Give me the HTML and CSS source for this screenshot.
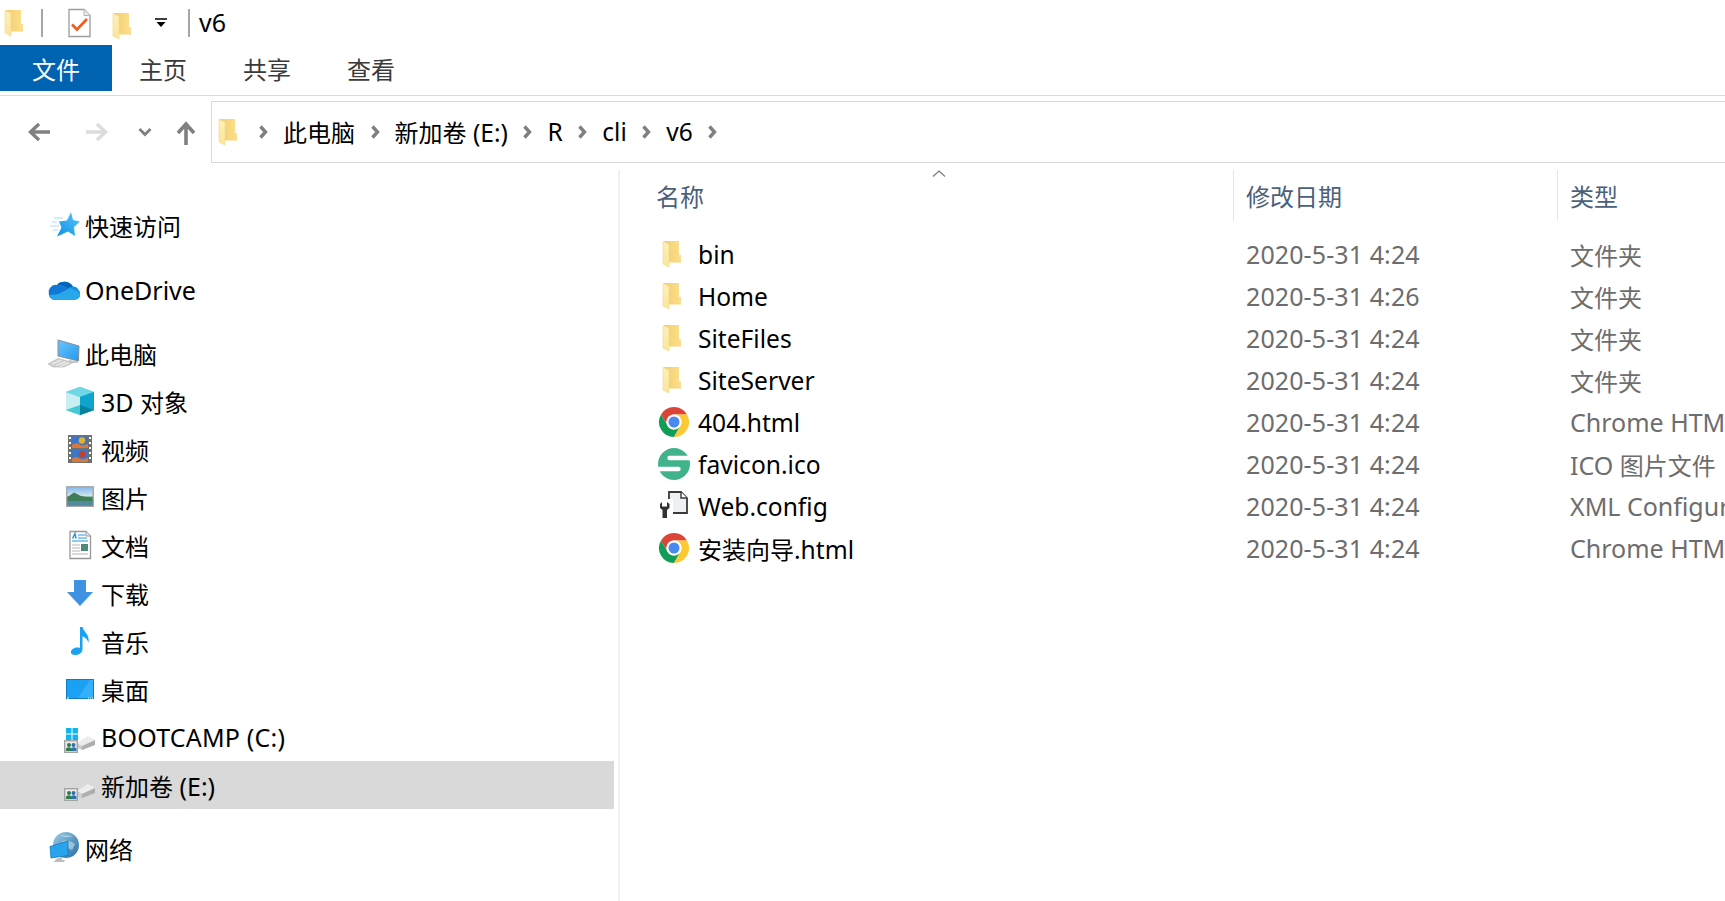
FILE: index.html
```html
<!DOCTYPE html>
<html lang="zh-CN">
<head>
<meta charset="utf-8">
<title>v6</title>
<link rel="stylesheet" href="styles.css">
</head>
<body>
<svg class="defs" aria-hidden="true">
  <defs>
    <linearGradient id="gFolder" x1="0" y1="0" x2="1" y2="0"><stop offset="0" stop-color="#f4cd6c"/><stop offset="1" stop-color="#fbe08f"/></linearGradient>
    <linearGradient id="gFront" x1="0" y1="0" x2="0" y2="1"><stop offset="0" stop-color="#fff0b8"/><stop offset="1" stop-color="#fbe59c"/></linearGradient>
    <linearGradient id="gStar" x1="0" y1="1" x2="1" y2="0"><stop offset="0" stop-color="#0a8fe8"/><stop offset="1" stop-color="#5cc8fb"/></linearGradient>
    <linearGradient id="gScreen" x1="0" y1="0" x2="1" y2="1"><stop offset="0" stop-color="#6cc4fb"/><stop offset="1" stop-color="#1f9bf0"/></linearGradient>
    <linearGradient id="gSky" x1="0" y1="0" x2="0" y2="1"><stop offset="0" stop-color="#7fb7ee"/><stop offset=".45" stop-color="#cfe4ea"/><stop offset=".55" stop-color="#4c8a5c"/><stop offset="1" stop-color="#3f7d96"/></linearGradient>
    <linearGradient id="gGlobe" x1="0" y1="0" x2="1" y2="1"><stop offset="0" stop-color="#9fcde6"/><stop offset="1" stop-color="#246ea6"/></linearGradient>

    <symbol id="i-folder" viewBox="0 0 32 32">
      <path d="M6 3H21V17H23V24H10L6 20z" fill="url(#gFolder)"/>
      <path d="M5 3.500L11 6V29L5 26z" fill="url(#gFront)" stroke="#f2d889" stroke-width=".6"/>
      <path d="M11 24H23" stroke="#f7d778" stroke-width="1"/>
    </symbol>
    <symbol id="i-chrome" viewBox="0 0 32 32">
      <path d="M3 8.500A15 15 0 0 1 29 8.500H16A7.500 7.500 0 0 0 9.500 19.750Z" fill="#db4437"/>
      <path d="M3 8.500L9.500 19.750A7.500 7.500 0 0 0 22.500 19.750L16 31A15 15 0 0 1 3 8.500Z" fill="#0f9d58"/>
      <path d="M29 8.500H16A7.500 7.500 0 0 1 22.500 19.750L16 31A15 15 0 0 0 29 8.500Z" fill="#fcc934"/>
      <circle cx="16" cy="16" r="7.500" fill="#fff"/>
      <circle cx="16" cy="16" r="5.500" fill="#4a8af0"/>
    </symbol>
    <symbol id="i-s" viewBox="0 0 32 32">
      <circle cx="16" cy="16" r="16" fill="#41b38b"/>
      <path d="M34 10H11.500" stroke="#fff" stroke-width="4.400" stroke-linecap="round" fill="none"/>
      <path d="M-2 21H20.500" stroke="#fff" stroke-width="4.400" stroke-linecap="round" fill="none"/>
    </symbol>
    <symbol id="i-config" viewBox="0 0 32 32">
      <path d="M11 2H23L29 8V23H11z" fill="#eff0f4" stroke="#3a3a3a" stroke-width="1.800"/>
      <path d="M23 2V8H29" fill="#fff" stroke="#3a3a3a" stroke-width="1.400"/>
      <rect x="1" y="9" width="14" height="21" fill="#fff"/>
      <path d="M4 12V16.500H9V12L11.500 14V18L9 20V28H4.500V20L2 18V14z" fill="#333"/>
    </symbol>
    <symbol id="i-star" viewBox="0 0 32 32">
      <path d="M23 3L25 11L32 12.500L26 18L27 27L20 22.500L9 27.500L13.500 18.500L11 12.500L19 11.500z" fill="url(#gStar)"/>
      <path d="M6 9H15M4 13H9M2 17H11M5 21H10" stroke="#a8dcfa" stroke-width="1.200"/>
    </symbol>
    <symbol id="i-onedrive" viewBox="0 0 32 32">
      <path d="M10 25H27A5 5 0 0 0 31 16.500A7 7 0 0 0 25 12.500A10 10 0 0 0 9 11A8 8 0 0 0 1 18.500A6 6 0 0 0 10 25Z" fill="#1490df"/>
      <path d="M9 11A10 10 0 0 1 25 12.500L20 14L14 11.500z" fill="#0364b8"/>
      <path d="M1.500 21A5.500 5.500 0 0 0 7 26H27A5 5 0 0 0 31 18L22 14L10 20z" fill="#28a8ea"/>
      <path d="M9 11L14.500 12.500L21 14.500L10 20L1.500 21A7 7 0 0 1 9 11z" fill="#0f78d4"/>
    </symbol>
    <symbol id="i-pc" viewBox="0 0 32 32">
      <path d="M10 3L31 9L30.500 24L10 19z" fill="url(#gScreen)" stroke="#8a8f94" stroke-width="1"/>
      <path d="M21 23V26H30V24.500z" fill="#c6c6c6"/>
      <path d="M0 27L10 21.500L25 25.500L16 30H5z" fill="#cfcfcf" stroke="#b0b0b0" stroke-width=".6"/>
      <path d="M4 27L13 23M8 28.500L18 24.500M12 29.500L21 25.500" stroke="#f5f5f5" stroke-width="1"/>
    </symbol>
    <symbol id="i-cube" viewBox="0 0 32 32">
      <path d="M16 2L30 7V25L16 30L2 25V7z" fill="#0fb3cf"/>
      <path d="M16 2L30 7L16 12L2 7z" fill="#6fd8e4"/>
      <path d="M2 7L16 12V30L2 25z" fill="#c7eff2"/>
      <path d="M16 12L30 7V25L16 30z" fill="#0ea4cc"/>
      <path d="M2 25L16 20V30z" fill="#43c8d6"/>
      <path d="M30 25L16 20V30z" fill="#06829f"/>
    </symbol>
    <symbol id="i-video" viewBox="0 0 32 32">
      <rect x="4" y="2" width="24" height="28" fill="#707070"/>
      <rect x="8" y="3.500" width="16" height="11.500" fill="#3b77c9"/>
      <rect x="8" y="17" width="16" height="12" fill="#3b77c9"/>
      <path d="M8 15V11.500L13 10L18 12.500L24 11V15zM8 29V25.500L13 24L18 26.500L24 25V29z" fill="#d9783a"/>
      <circle cx="18" cy="7.500" r="3.200" fill="#e5b22e"/><circle cx="18" cy="21" r="3.200" fill="#c4402e"/>
      <path d="M5 4h2v2h-2zM5 9h2v2h-2zM5 14h2v2h-2zM5 19h2v2h-2zM5 24h2v2h-2zM25 4h2v2h-2zM25 9h2v2h-2zM25 14h2v2h-2zM25 19h2v2h-2zM25 24h2v2h-2z" fill="#fff"/>
    </symbol>
    <symbol id="i-pics" viewBox="0 0 32 32">
      <rect x="2.800" y="5.800" width="26.500" height="19.500" fill="url(#gSky)" stroke="#a9a9a9" stroke-width="1.500"/>
      <path d="M3.500 16L10 11.500L17 15L28.500 17.500V20H3.500z" fill="#3f7d58"/>
      <path d="M3.500 20H28.500V24.500H3.500z" fill="#51899f"/>
    </symbol>
    <symbol id="i-doc" viewBox="0 0 32 32">
      <path d="M6 2.500H22L26.500 7V29.500H6z" fill="#fff" stroke="#979797" stroke-width="1.300"/>
      <path d="M22 2.500V7H26.500" fill="#e8e8e8" stroke="#979797"/>
      <path d="M8.500 9.500L11 4.500L12 9.500" fill="none" stroke="#2497ea" stroke-width="1.500"/>
      <path d="M14 6H21M14 9H23M8 12H24" stroke="#2497ea" stroke-width="1.200"/>
      <path d="M8 16H16M8 19H16M8 22H16M8 25H24" stroke="#b5b5b5" stroke-width="1.100"/>
      <rect x="17" y="15" width="7" height="7" fill="#4d8a78"/>
    </symbol>
    <symbol id="i-down" viewBox="0 0 32 32">
      <path d="M10 3H22V15H29L16 29L3 15H10z" fill="#3f92e2"/>
    </symbol>
    <symbol id="i-music" viewBox="0 0 32 32">
      <path d="M16 2H18.500C19.500 7 26 9 24.500 18C24 15 21 12 18.500 11.500V24C18.500 28 14.500 30 11 30C8 30 6.500 28.500 7 26.500C7.500 24 12 21.500 16 23z" fill="#1ba1f1"/>
    </symbol>
    <symbol id="i-desk" viewBox="0 0 32 32">
      <rect x="2.500" y="6.500" width="27" height="19" fill="#1ba1f4" stroke="#0f7cc4"/>
      <path d="M14 25L26 7H29V25z" fill="#34aeff"/>
      <path d="M3 25H5M24 25H25M26 25H27M28 25H29" stroke="#fff" stroke-width="1"/>
    </symbol>
    <symbol id="i-drive" viewBox="0 0 32 32">
      <path d="M13 22L24 15L31 19L18 25z" fill="#ececec"/>
      <path d="M18 25L31 19V24L18 29z" fill="#aeaeae"/>
      <path d="M13 22L18 25V29L13 27z" fill="#cdcdcd"/>
      <rect x="0.700" y="19.700" width="12.600" height="11.600" fill="#ececec" stroke="#a0a0a0" stroke-width="1.300"/>
      <circle cx="5" cy="24" r="2" fill="#2f7a50"/><path d="M2 30V27.500Q5 25 7.500 27.500V30z" fill="#2f7a50"/>
      <circle cx="9.500" cy="24" r="2" fill="#2f70b0"/><path d="M7 30V27.500Q9.500 25 12.500 27.500V30z" fill="#2f70b0"/>
    </symbol>
    <symbol id="i-win" viewBox="0 0 32 32">
      <path d="M13 22L24 15L31 19L18 25z" fill="#ececec"/>
      <path d="M18 25L31 19V24L18 29z" fill="#aeaeae"/>
      <path d="M13 22L18 25V29L13 27z" fill="#cdcdcd"/>
      <path d="M2 7H7.500V12.500H2zM8.500 7H14V12.500H8.500zM2 13.500H7.500V19H2zM8.500 13.500H14V19H8.500z" fill="#12b5ee"/>
      <rect x="0.700" y="19.700" width="12.600" height="11.600" fill="#ececec" stroke="#a0a0a0" stroke-width="1.300"/>
      <circle cx="5" cy="24" r="2" fill="#2f7a50"/><path d="M2 30V27.500Q5 25 7.500 27.500V30z" fill="#2f7a50"/>
      <circle cx="9.500" cy="24" r="2" fill="#2f70b0"/><path d="M7 30V27.500Q9.500 25 12.500 27.500V30z" fill="#2f70b0"/>
    </symbol>
    <symbol id="i-net" viewBox="0 0 32 32">
      <circle cx="18" cy="13" r="13" fill="url(#gGlobe)"/>
      <path d="M12 3Q18 7 25 4M14 9Q20 7 27 12L24 18L17 15z" fill="#d5e9f3" opacity=".55"/>
      <path d="M2 14.500L20 9V23.500L3 26z" fill="#27a4ec" stroke="#1877b8" stroke-width=".8"/>
      <path d="M8 27L14 25V28H17L16 30H6z" fill="#bdbdbd"/>
    </symbol>
    <symbol id="i-check" viewBox="0 0 32 32">
      <path d="M6 2.500H21L27 8.500V29.500H6z" fill="#fff" stroke="#9c9c9c" stroke-width="1.300"/>
      <path d="M21 2.500V8.500H27" fill="#ececec" stroke="#b5b5b5"/>
      <path d="M9 17.500L14 22.500L24 12" fill="none" stroke="#f25c1e" stroke-width="2.700"/>
    </symbol>
    <symbol id="i-crumb" viewBox="0 0 10 16">
      <path d="M2.500 2.500L7.500 8L2.500 13.500" fill="none" stroke="#808080" stroke-width="3.400"/>
    </symbol>
  </defs>
</svg>

<div class="window">
  <header class="titlebar">
    <svg class="ico"><use href="#i-folder"/></svg>
    <span class="tsep first"></span>
    <svg class="ico qa-doc"><use href="#i-check"/></svg>
    <svg class="ico qa-folder"><use href="#i-folder"/></svg>
    <svg class="qa-drop" viewBox="0 0 12 10"><path d="M0 1H12" stroke="#000" stroke-width="1.500"/><path d="M1.500 4H10.500L6 9z"/></svg>
    <span class="tsep second"></span>
    <span class="title">v6</span>
  </header>

  <nav class="ribbon">
    <span class="tab tab-file cjk">文件</span>
    <span class="tab cjk">主页</span>
    <span class="tab cjk">共享</span>
    <span class="tab cjk">查看</span>
  </nav>

  <div class="navbar">
    <div class="navbtns">
      <svg class="nb nb-back" viewBox="0 0 24 20"><path d="M23 10H4M12 2L3.500 10L12 18" fill="none" stroke="#808080" stroke-width="3.400"/></svg>
      <svg class="nb nb-fwd" viewBox="0 0 24 20"><path d="M1 10H20M12 2L20.500 10L12 18" fill="none" stroke="#dcdcdc" stroke-width="3.400"/></svg>
      <svg class="nb nb-hist" viewBox="0 0 14 10"><path d="M1.500 2L7 7.500L12.500 2" fill="none" stroke="#808080" stroke-width="2.800"/></svg>
      <svg class="nb nb-up" viewBox="0 0 20 24"><path d="M10 24V4M2 12L10 3L18 12" fill="none" stroke="#808080" stroke-width="3.600"/></svg>
    </div>
    <div class="address">
      <svg class="ico addr-folder"><use href="#i-folder"/></svg>
      <svg class="crumb-sep"><use href="#i-crumb"/></svg>
      <span class="cjk crumb">此电脑</span>
      <svg class="crumb-sep"><use href="#i-crumb"/></svg>
      <span class="crumb"><span class="cjk">新加卷</span> (E:)</span>
      <svg class="crumb-sep"><use href="#i-crumb"/></svg>
      <span class="crumb">R</span>
      <svg class="crumb-sep"><use href="#i-crumb"/></svg>
      <span class="crumb">cli</span>
      <svg class="crumb-sep"><use href="#i-crumb"/></svg>
      <span class="crumb">v6</span>
      <svg class="crumb-sep"><use href="#i-crumb"/></svg>
    </div>
  </div>

  <main class="main">
    <aside class="sidebar">
      <div class="tree-item quick"><svg class="ico"><use href="#i-star"/></svg><span class="cjk">快速访问</span></div>
      <div class="tree-item group"><svg class="ico"><use href="#i-onedrive"/></svg><span>OneDrive</span></div>
      <div class="tree-item group"><svg class="ico"><use href="#i-pc"/></svg><span class="cjk">此电脑</span></div>
      <div class="tree-item sub"><svg class="ico"><use href="#i-cube"/></svg><span>3D <span class="cjk">对象</span></span></div>
      <div class="tree-item sub"><svg class="ico"><use href="#i-video"/></svg><span class="cjk">视频</span></div>
      <div class="tree-item sub"><svg class="ico"><use href="#i-pics"/></svg><span class="cjk">图片</span></div>
      <div class="tree-item sub"><svg class="ico"><use href="#i-doc"/></svg><span class="cjk">文档</span></div>
      <div class="tree-item sub"><svg class="ico"><use href="#i-down"/></svg><span class="cjk">下载</span></div>
      <div class="tree-item sub"><svg class="ico"><use href="#i-music"/></svg><span class="cjk">音乐</span></div>
      <div class="tree-item sub"><svg class="ico"><use href="#i-desk"/></svg><span class="cjk">桌面</span></div>
      <div class="tree-item sub"><svg class="ico"><use href="#i-win"/></svg><span class="caps">BOOTCAMP (C:)</span></div>
      <div class="tree-item sub selected"><svg class="ico"><use href="#i-drive"/></svg><span><span class="cjk">新加卷</span> (E:)</span></div>
      <div class="tree-item group"><svg class="ico"><use href="#i-net"/></svg><span class="cjk">网络</span></div>
    </aside>

    <section class="files">
      <div class="columns">
        <div class="col col-name cjk">名称<svg class="sort" viewBox="0 0 14 7"><path d="M1 6.500L7 1L13 6.500" fill="none" stroke="#7a7a7a" stroke-width="1.200"/></svg></div>
        <div class="col cjk">修改日期</div>
        <div class="col cjk">类型</div>
      </div>
      <div class="rows">
        <div class="row"><div class="name"><svg class="ico"><use href="#i-folder"/></svg><span>bin</span></div><div class="cell date">2020-5-31 4:24</div><div class="cell cjk">文件夹</div></div>
        <div class="row"><div class="name"><svg class="ico"><use href="#i-folder"/></svg><span>Home</span></div><div class="cell date">2020-5-31 4:26</div><div class="cell cjk">文件夹</div></div>
        <div class="row"><div class="name"><svg class="ico"><use href="#i-folder"/></svg><span>SiteFiles</span></div><div class="cell date">2020-5-31 4:24</div><div class="cell cjk">文件夹</div></div>
        <div class="row"><div class="name"><svg class="ico"><use href="#i-folder"/></svg><span>SiteServer</span></div><div class="cell date">2020-5-31 4:24</div><div class="cell cjk">文件夹</div></div>
        <div class="row"><div class="name"><svg class="ico"><use href="#i-chrome"/></svg><span>404.html</span></div><div class="cell date">2020-5-31 4:24</div><div class="cell">Chrome HTML Document</div></div>
        <div class="row"><div class="name"><svg class="ico"><use href="#i-s"/></svg><span>favicon.ico</span></div><div class="cell date">2020-5-31 4:24</div><div class="cell">ICO <span class="cjk">图片文件</span></div></div>
        <div class="row"><div class="name"><svg class="ico"><use href="#i-config"/></svg><span>Web.config</span></div><div class="cell date">2020-5-31 4:24</div><div class="cell">XML Configuration File</div></div>
        <div class="row"><div class="name"><svg class="ico"><use href="#i-chrome"/></svg><span><span class="cjk">安装向导</span>.html</span></div><div class="cell date">2020-5-31 4:24</div><div class="cell">Chrome HTML Document</div></div>
      </div>
    </section>
  </main>
</div>
</body>
</html>
```

FILE: styles.css
```css
* { box-sizing: border-box; }

html, body {
  margin: 0;
  padding: 0;
  background: #fff;
}

body {
  font-family: "Noto Sans", "Noto Sans CJK SC", sans-serif;
  font-size: 25px;
  color: #000;
  overflow: hidden;
}

.cjk {
  font-family: "Noto Sans CJK SC", "Noto Sans", sans-serif;
  font-size: 24px;
}

.defs {
  position: absolute;
  width: 0;
  height: 0;
  overflow: hidden;
}

.window {
  width: 1725px;
  height: 901px;
  display: flex;
  flex-direction: column;
  overflow: hidden;
}

.ico {
  width: 32px;
  height: 32px;
  flex: none;
}

/* title bar */
.titlebar {
  height: 45px;
  flex: none;
  display: flex;
  align-items: center;
}

.tsep {
  width: 2px;
  height: 28px;
  background: #a6a6a6;
  flex: none;
}

.tsep.first { margin-left: 9px; }
.tsep.second { margin-left: 21px; }
.qa-doc { margin-left: 20px; }
.qa-folder { margin-left: 13px; margin-top: 6px; }

.qa-drop {
  width: 12px;
  height: 10px;
  flex: none;
  margin-left: 15px;
}

.title {
  margin-left: 9px;
  line-height: 1;
}

/* ribbon tabs */
.ribbon {
  height: 51px;
  flex: none;
  display: flex;
  align-items: flex-start;
  border-bottom: 1.5px solid #dadbdc;
}

.tab {
  height: 46px;
  line-height: 48px;
  padding: 0 29px 0 27px;
  color: #3a3a3a;
}

.tab-file {
  width: 112px;
  padding: 0 32px;
  background: #0063b1;
  color: #fff;
}

/* navigation bar */
.navbar {
  height: 67px;
  flex: none;
  display: flex;
  padding-top: 5px;
}

.navbtns {
  width: 211px;
  flex: none;
  display: flex;
  align-items: center;
}

.nb { flex: none; }
.nb-back { width: 24px; height: 20px; margin-left: 27px; }
.nb-fwd { width: 24px; height: 20px; margin-left: 34px; }
.nb-hist { width: 14px; height: 10px; margin-left: 29px; }
.nb-up { width: 20px; height: 24px; margin-left: 24px; margin-top: 2px; }

.address {
  flex: 1;
  height: 62px;
  border: 1.5px solid #d9d9d9;
  border-right: 0;
  display: flex;
  align-items: center;
}

.addr-folder { margin-left: 2px; margin-right: 12px; }

.crumb-sep {
  width: 10px;
  height: 16px;
  flex: none;
}

.crumb {
  margin: 0 14.6px 1px 15px;
  white-space: nowrap;
  font-size: 24.5px;
}

.crumb.cjk,
.crumb .cjk {
  font-size: 24px;
}

/* main split */
.main {
  flex: 1;
  min-height: 0;
  display: flex;
  padding-top: 7px;
}

.sidebar {
  width: 620px;
  flex: none;
  padding: 31px 4px 0 0;
  border-right: 2px solid #f1f1f1;
}

.tree-item {
  height: 48px;
  display: flex;
  align-items: center;
  gap: 5px;
  padding-left: 48px;
  white-space: nowrap;
}

.tree-item.group { margin-top: 15px; }
.tree-item.quick + .group { margin-top: 17px; }
.tree-item.sub { padding-left: 64px; gap: 5px; }
.tree-item.selected { background: #d9d9d9; }
.caps { letter-spacing: .2px; }

/* file list */
.files {
  flex: 1;
  min-width: 0;
  overflow: hidden;
}

.columns {
  height: 51px;
  display: grid;
  grid-template-columns: 613px 324px 1fr;
}

.col {
  position: relative;
  padding-left: 12px;
  line-height: 51px;
  color: #4c607a;
  border-left: 1px solid #e5e5e5;
}

.col-name {
  padding-left: 36px;
  border-left: 0;
}

.sort {
  position: absolute;
  left: 312px;
  top: 0;
  width: 14px;
  height: 7px;
}

.rows {
  margin-top: 12px;
}

.row {
  height: 42px;
  display: grid;
  grid-template-columns: 613px 324px 1fr;
  align-items: center;
  white-space: nowrap;
}

.name {
  display: flex;
  align-items: center;
  gap: 8px;
  padding-left: 38px;
  font-size: 24.6px;
}

.cell {
  padding-left: 13px;
  color: #6d6d6d;
  overflow: hidden;
}

.date { letter-spacing: .1px; }
```
